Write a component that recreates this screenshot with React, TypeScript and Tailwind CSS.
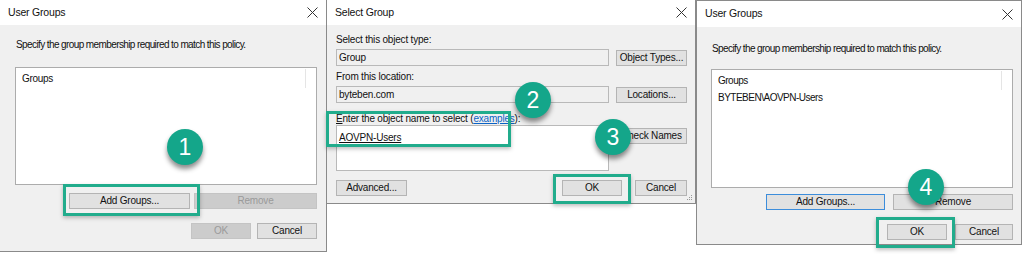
import React from "react";

const font = "font-['Liberation_Sans',Arial,sans-serif]";

function XIcon() {
  return (
    <svg width="11" height="11" viewBox="0 0 11 11" className="block">
      <path d="M0.5 0.5 L10.5 10.5 M10.5 0.5 L0.5 10.5" stroke="#333" strokeWidth="1" fill="none" />
    </svg>
  );
}

function Btn({ label, w, disabled, focus, className = "" }: { label: string; w: string; disabled?: boolean; focus?: boolean; className?: string }) {
  const base = "h-[16px] flex items-center justify-center text-[10px] leading-none shrink-0 tracking-[-0.2px] ";
  const style = disabled
    ? "bg-[#cccccc] border border-[#c4c4c4] text-[#9a9a9a]"
    : focus
    ? "bg-[#e1e1e1] border border-[#3c8ddb] text-[#111]"
    : "bg-[#e1e1e1] border border-[#b4b4b4] text-[#111]";
  return <div className={base + style + " " + w + " " + className}>{label}</div>;
}

function Badge({ n, className }: { n: string; className: string }) {
  return (
    <div
      className={
        "absolute w-[36px] h-[36px] rounded-full bg-[#14a68a] text-white flex items-center justify-center text-[23px] leading-none shadow-[0_4px_5px_rgba(0,0,0,0.45)] " +
        className
      }
    >
      {n}
    </div>
  );
}

function Highlight({ className }: { className: string }) {
  return <div className={"absolute border-[3px] border-[#21ac8c] shadow-[0_2px_4px_rgba(0,0,0,0.25)] " + className} />;
}

function TitleBar({ title, h }: { title: string; h: string }) {
  return (
    <div className={"bg-white flex items-center justify-between pl-[8px] pr-[8px] " + h}>
      <span className="text-[10.5px] text-[#111] tracking-[-0.2px]">{title}</span>
      <XIcon />
    </div>
  );
}

function UserGroups1() {
  return (
    <div className="w-[327px] h-[252px] border-r border-b border-[#8a8a8a] bg-[#f0f0f0] flex flex-col shrink-0">
      <TitleBar title="User Groups" h="h-[25px]" />
      <div className="flex flex-col pl-[15px] pr-[9px] pt-[14px]">
        <div className="text-[10px] tracking-[-0.6px] text-[#111] leading-[12px] pl-[1px]">Specify the group membership required to match this policy.</div>
        <div className="mt-[16px] h-[118px] bg-white border border-[#acacac] relative">
          <div className="flex items-center h-[20px] text-[10px] text-[#111] pl-[6px] tracking-[-0.3px]">Groups</div>
          <div className="absolute left-[289px] top-[1px] w-px h-[19px] bg-[#e5e5e5]" />
        </div>
        <div className="mt-[8px] flex justify-end gap-[4px]">
          <Btn label="Add Groups..." w="w-[121px]" />
          <Btn label="Remove" w="w-[123px]" disabled />
        </div>
        <div className="mt-[14px] flex justify-end gap-[6px]">
          <Btn label="OK" w="w-[60px]" disabled />
          <Btn label="Cancel" w="w-[60px]" />
        </div>
      </div>
    </div>
  );
}

function SelectGroup() {
  return (
    <div className="w-[369px] h-[204px] border-r border-b border-[#8a8a8a] bg-[#f0f0f0] flex flex-col shrink-0 relative">
      <TitleBar title="Select Group" h="h-[25px]" />
      <div className="flex flex-col pl-[9px] pr-[8px] text-[10px] text-[#111] tracking-[-0.2px]">
        <div className="mt-[9px] leading-[12px]">Select this object type:</div>
        <div className="mt-[3px] flex items-center gap-[7px]">
          <div className="w-[273px] h-[17px] border border-[#b9b9b9] bg-[#f0f0f0] flex items-center pl-[2px]">Group</div>
          <Btn label="Object Types..." w="w-[71px]" />
        </div>
        <div className="mt-[5px] leading-[12px]">From this location:</div>
        <div className="mt-[3px] flex items-center gap-[7px]">
          <div className="w-[273px] h-[17px] border border-[#b9b9b9] bg-[#f0f0f0] flex items-center pl-[2px]">byteben.com</div>
          <Btn label="Locations..." w="w-[71px]" />
        </div>
        <div className="mt-[10px] leading-[12px]">
          <span className="underline">E</span>nter the object name to select (<span className="text-[#0b63c5] underline">examples</span>):
        </div>
        <div className="mt-[0px] flex items-start gap-[7px]">
          <div className="w-[273px] h-[46px] border border-[#b9b9b9] bg-white pl-[2px] pt-[4px]">
            <span className="underline">AOVPN-Users</span>
          </div>
          <Btn label="Check Names" w="w-[71px]" className="mt-[3px]" />
        </div>
        <div className="mt-[9px] flex items-center">
          <Btn label="Advanced..." w="w-[71px]" />
          <div className="flex-1" />
          <Btn label="OK" w="w-[60px]" />
          <Btn label="Cancel" w="w-[52px]" className="ml-[13px]" />
        </div>
      </div>
      <div className="absolute right-[3px] bottom-[3px] grid grid-cols-3 gap-[1px]">
        <span />
        <span />
        <span className="w-[1px] h-[1px] bg-[#999]" />
        <span />
        <span className="w-[1px] h-[1px] bg-[#999]" />
        <span className="w-[1px] h-[1px] bg-[#999]" />
        <span className="w-[1px] h-[1px] bg-[#999]" />
        <span className="w-[1px] h-[1px] bg-[#999]" />
        <span className="w-[1px] h-[1px] bg-[#999]" />
      </div>
    </div>
  );
}

function UserGroups2() {
  return (
    <div className="w-[326px] h-[245px] border-l border-r border-b border-t border-[#8a8a8a] bg-[#f0f0f0] flex flex-col shrink-0">
      <TitleBar title="User Groups" h="h-[26px]" />
      <div className="flex flex-col pl-[14px] pr-[8px] pt-[16px]">
        <div className="text-[10px] tracking-[-0.6px] text-[#111] leading-[12px] pl-[1px]">Specify the group membership required to match this policy.</div>
        <div className="mt-[14px] h-[119px] bg-white border border-[#acacac] relative text-[10px] text-[#111] tracking-[-0.5px]">
          <div className="flex items-center h-[20px] pl-[6px]">Groups</div>
          <div className="flex items-center h-[14px] pl-[6px]">BYTEBEN\AOVPN-Users</div>
          <div className="absolute left-[289px] top-[1px] w-px h-[19px] bg-[#e5e5e5]" />
        </div>
        <div className="mt-[6px] flex justify-end gap-[8px]">
          <Btn label="Add Groups..." w="w-[119px]" focus />
          <Btn label="Remove" w="w-[120px]" />
        </div>
        <div className="mt-[14px] flex justify-end gap-[8px]">
          <Btn label="OK" w="w-[60px]" />
          <Btn label="Cancel" w="w-[58px]" />
        </div>
      </div>
    </div>
  );
}

export default function App() {
  return (
    <div className={"relative w-[1024px] h-[254px] bg-white overflow-hidden " + font}>
      <div className="flex items-start">
        <UserGroups1 />
        <SelectGroup />
        <UserGroups2 />
      </div>
      <Highlight className="left-[63px] top-[184px] w-[137px] h-[32px]" />
      <Highlight className="left-[326px] top-[111px] w-[185px] h-[36px]" />
      <Highlight className="left-[553px] top-[174px] w-[78px] h-[30px]" />
      <Highlight className="left-[876px] top-[217px] w-[79px] h-[31px]" />
      <Badge n="1" className="left-[167px] top-[129px]" />
      <Badge n="2" className="left-[515px] top-[82px]" />
      <Badge n="3" className="left-[595px] top-[119px]" />
      <Badge n="4" className="left-[908px] top-[169px]" />
    </div>
  );
}
